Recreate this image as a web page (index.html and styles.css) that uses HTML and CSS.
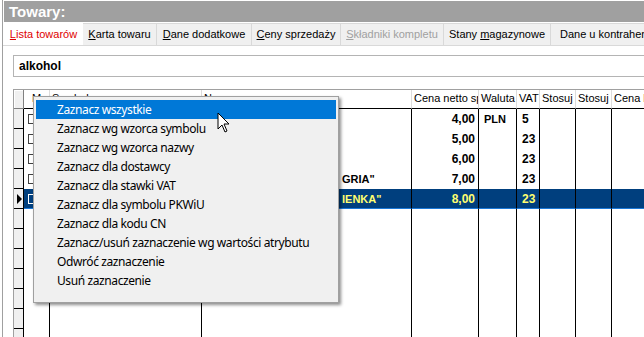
FILE: index.html
```html
<!DOCTYPE html>
<html lang="pl">
<head>
  <meta charset="UTF-8">
  <title>Towary</title>
  <link rel="stylesheet" href="styles.css">
</head>
<body>
  <div class="app">
    <div class="titlebar">Towary:</div>

    <div class="tabs">
      <div class="tab active" style="width:79px"><u>L</u>ista towarów</div>
      <div class="tab" style="width:75px"><u>K</u>arta towaru</div>
      <div class="tab" style="width:96px"><u>D</u>ane dodatkowe</div>
      <div class="tab" style="width:90px"><u>C</u>eny sprzedaży</div>
      <div class="tab disabled" style="width:104px"><u>S</u>kładniki kompletu</div>
      <div class="tab" style="width:108px">Stany <u>m</u>agazynowe</div>
      <div class="tab last" style="width:90px">Dane u kontrahenta</div>
    </div>

    <div class="panel">
      <div class="search">alkohol</div>

      <div class="grid">
        <div class="row head">
          <div class="ind"></div>
          <div class="cell center">M</div>
          <div class="cell">Symbol</div>
          <div class="cell">Nazwa</div>
          <div class="cell">Cena netto sprzedaży</div>
          <div class="cell">Waluta</div>
          <div class="cell">VAT</div>
          <div class="cell">Stosuj cenę</div>
          <div class="cell">Stosuj cenę</div>
          <div class="cell">Cena brutto</div>
        </div>

        <div class="row">
          <div class="ind"></div>
          <div class="cell"><span class="check"></span></div>
          <div class="cell"></div>
          <div class="cell"></div>
          <div class="cell num">4,00</div>
          <div class="cell cur">PLN</div>
          <div class="cell vat">5</div>
          <div class="cell"></div><div class="cell"></div><div class="cell"></div>
        </div>
        <div class="row">
          <div class="ind"></div>
          <div class="cell"><span class="check"></span></div>
          <div class="cell"></div>
          <div class="cell"></div>
          <div class="cell num">5,00</div>
          <div class="cell cur"></div>
          <div class="cell vat">23</div>
          <div class="cell"></div><div class="cell"></div><div class="cell"></div>
        </div>
        <div class="row">
          <div class="ind"></div>
          <div class="cell"><span class="check"></span></div>
          <div class="cell"></div>
          <div class="cell"></div>
          <div class="cell num">6,00</div>
          <div class="cell cur"></div>
          <div class="cell vat">23</div>
          <div class="cell"></div><div class="cell"></div><div class="cell"></div>
        </div>
        <div class="row">
          <div class="ind"></div>
          <div class="cell"><span class="check"></span></div>
          <div class="cell"></div>
          <div class="cell name-tail">GRIA"</div>
          <div class="cell num">7,00</div>
          <div class="cell cur"></div>
          <div class="cell vat">23</div>
          <div class="cell"></div><div class="cell"></div><div class="cell"></div>
        </div>
        <div class="row selected">
          <div class="ind"><span class="arrow"></span></div>
          <div class="cell"><span class="check"></span></div>
          <div class="cell"></div>
          <div class="cell name-tail">IENKA"</div>
          <div class="cell num">8,00</div>
          <div class="cell cur"></div>
          <div class="cell vat">23</div>
          <div class="cell"></div><div class="cell"></div><div class="cell"></div>
        </div>

        <div class="row empty"><div class="ind"></div><div class="cell"></div><div class="cell"></div><div class="cell"></div><div class="cell"></div><div class="cell"></div><div class="cell"></div><div class="cell"></div><div class="cell"></div><div class="cell"></div></div>
        <div class="row empty"><div class="ind"></div><div class="cell"></div><div class="cell"></div><div class="cell"></div><div class="cell"></div><div class="cell"></div><div class="cell"></div><div class="cell"></div><div class="cell"></div><div class="cell"></div></div>
        <div class="row empty"><div class="ind"></div><div class="cell"></div><div class="cell"></div><div class="cell"></div><div class="cell"></div><div class="cell"></div><div class="cell"></div><div class="cell"></div><div class="cell"></div><div class="cell"></div></div>
        <div class="row empty"><div class="ind"></div><div class="cell"></div><div class="cell"></div><div class="cell"></div><div class="cell"></div><div class="cell"></div><div class="cell"></div><div class="cell"></div><div class="cell"></div><div class="cell"></div></div>
        <div class="row empty"><div class="ind"></div><div class="cell"></div><div class="cell"></div><div class="cell"></div><div class="cell"></div><div class="cell"></div><div class="cell"></div><div class="cell"></div><div class="cell"></div><div class="cell"></div></div>
        <div class="row empty"><div class="ind"></div><div class="cell"></div><div class="cell"></div><div class="cell"></div><div class="cell"></div><div class="cell"></div><div class="cell"></div><div class="cell"></div><div class="cell"></div><div class="cell"></div></div>
        <div class="row empty"><div class="ind"></div><div class="cell"></div><div class="cell"></div><div class="cell"></div><div class="cell"></div><div class="cell"></div><div class="cell"></div><div class="cell"></div><div class="cell"></div><div class="cell"></div></div>
      </div>
    </div>

    <div class="menu">
      <div class="item hover">Zaznacz wszystkie</div>
      <div class="item">Zaznacz wg wzorca symbolu</div>
      <div class="item">Zaznacz wg wzorca nazwy</div>
      <div class="item">Zaznacz dla dostawcy</div>
      <div class="item">Zaznacz dla stawki VAT</div>
      <div class="item">Zaznacz dla symbolu PKWiU</div>
      <div class="item">Zaznacz dla kodu CN</div>
      <div class="item">Zaznacz/usuń zaznaczenie wg wartości atrybutu</div>
      <div class="item">Odwróć zaznaczenie</div>
      <div class="item">Usuń zaznaczenie</div>
    </div>

    <svg class="cursor" width="14" height="22" viewBox="0 0 14 22">
      <path d="M1 1 L1 17 L5 13 L8 20 L10 19 L7 12 L12 12 Z" fill="#fff" stroke="#000" stroke-width="1" stroke-linejoin="miter"/>
    </svg>
  </div>
</body>
</html>
```

FILE: styles.css
```css
* { box-sizing: border-box; }
html, body { margin: 0; padding: 0; background: #fff; }
body { font-family: "Liberation Sans", Arial, sans-serif; font-size: 11px; color: #000; width: 644px; height: 337px; overflow: hidden; }

.app { position: relative; height: 337px; margin-left: 2px; border-left: 1px solid #a0a0a0; overflow: hidden; }

.titlebar { height: 21px; margin: 1px 0 0 1px; background: #a0a0a0; color: #fff; font-weight: bold; font-size: 15px; line-height: 21px; padding-left: 5px; }

.tabs { display: flex; align-items: flex-end; height: 24px; padding-left: 1px; border-bottom: 1px solid #d9d9d9; white-space: nowrap; overflow: hidden; }
.tab { flex: none; height: 22px; line-height: 21px; text-align: center; background: #f0f0f0; border: 1px solid #d9d9d9; border-bottom: none; margin-right: -1px; overflow: hidden; }
.tab.last { flex: 1; text-align: left; padding-left: 9px; border-right: none; }
.tab.active { height: 24px; background: #fff; color: #e00000; border-color: #fff; line-height: 22px; margin-bottom: -1px; position: relative; }
.tab.disabled { color: #a0a0a0; }

.panel { padding: 9px 0 0 10px; }
.search { height: 22px; border: 1px solid #b4b4b4; border-right: none; font-weight: bold; line-height: 20px; padding-left: 5px; font-size: 12px; }

.grid { margin-top: 12px; border-top: 1px solid #a0a0a0; border-left: 1px solid #a0a0a0; }
.row { display: grid; grid-template-columns: 10px 26px 152px 210px 67px 38px 23px 36px 36px 1fr; height: 20px; }
.row .cell { border-right: 1px solid #000; white-space: nowrap; overflow: hidden; font-weight: bold; line-height: 20px; padding-left: 2px; }
.row .cell:last-child { border-right: none; }
.ind { background: #f0f0f0; border-right: 1px solid #000; border-bottom: 1px solid #000; position: relative; }

.row.head { height: 19px; }
.row.head .cell { font-weight: normal; border-right-color: #dcdcdc; border-bottom: 1px solid #000; line-height: 17px; text-overflow: clip; }
.row.head .cell.center { text-align: center; padding-left: 0; }
.row.head .ind { border-bottom-color: #808080; border-right-color: #808080; box-shadow: inset 1px 1px 0 #fff; }

.num { text-align: right; padding-right: 3px; font-size: 12px; }
.cur { padding-left: 5px !important; }
.vat { padding-left: 5px !important; font-size: 12px; }
.name-tail { padding-left: 140px !important; }

.check { display: inline-block; width: 9px; height: 10px; border: 1px solid #404040; margin: 5px 0 0 2px; vertical-align: top; background: #fff; }

.row.selected .cell { background: #003f7e; color: #ffff70; border-bottom: 1px solid #1a78d8; }
.row.selected .check { border-color: #fff; background: #003f7e; }
.arrow { position: absolute; left: 3px; top: 5px; border-left: 5px solid #000; border-top: 5px solid transparent; border-bottom: 5px solid transparent; }

.menu { position: absolute; left: 30px; top: 96px; width: 306px; height: 207px; background: #f0f0f0; border: 1px solid #a0a0a0; box-shadow: 2px 2px 3px rgba(0, 0, 0, 0.45); padding: 3px 2px 2px; font-family: "Noto Sans", "Open Sans", sans-serif; font-size: 12px; letter-spacing: -0.4px; }
.item { height: 19px; line-height: 19px; padding-left: 21px; white-space: nowrap; color: #000; }
.item.hover { background: #0078d7; color: #fff; }

.cursor { position: absolute; left: 214px; top: 112px; }
```
